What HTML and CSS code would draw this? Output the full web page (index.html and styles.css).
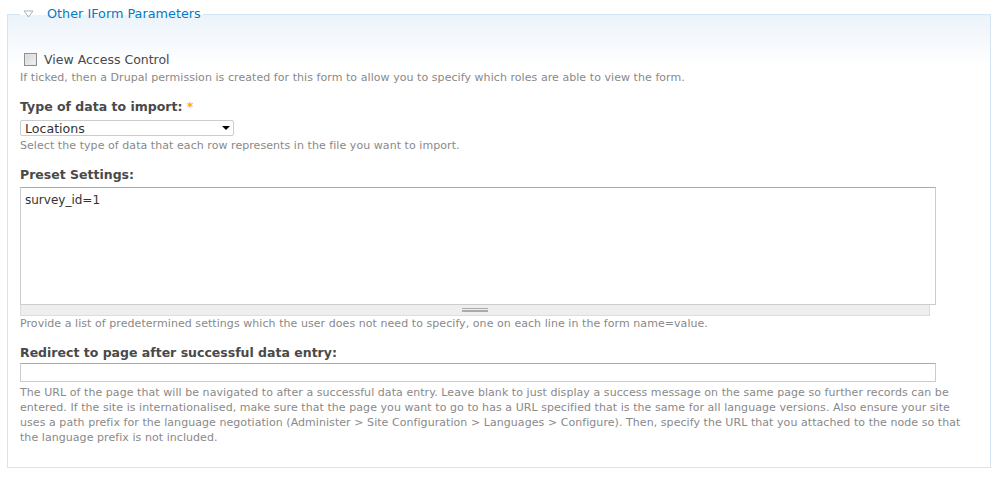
FILE: index.html
```html
<!DOCTYPE html>
<html>
<head>
<meta charset="utf-8">
<link rel="stylesheet" href="styles.css">
</head>
<body>
<fieldset class="box">
  <legend class="legend"><svg class="tri" width="11" height="8" viewBox="0 0 11 8"><path d="M1 1 L10 1 L5.5 7 Z" fill="none" stroke="#a9b1b8" stroke-width="1"/></svg><span class="legend-text">Other IForm Parameters</span></legend>

  <div class="check-row">
    <input type="checkbox" class="check">
    <span class="check-label">View Access Control</span>
  </div>
  <div class="desc d1">If ticked, then a Drupal permission is created for this form to allow you to specify which roles are able to view the form.</div>

  <div class="label l2">Type of data to import: <span class="req">*</span></div>
  <div class="select"><span>Locations</span><svg width="8" height="4" viewBox="0 0 8 4"><path d="M0 0 H8 L4 4 Z" fill="#000"/></svg></div>
  <div class="desc d2">Select the type of data that each row represents in the file you want to import.</div>

  <div class="label l3">Preset Settings:</div>
  <div class="textarea">survey_id=1</div>
  <div class="grippie"><span class="grip"></span></div>
  <div class="desc d3">Provide a list of predetermined settings which the user does not need to specify, one on each line in the form name=value.</div>

  <div class="label l4">Redirect to page after successful data entry:</div>
  <div class="input"></div>
  <div class="desc d4">The URL of the page that will be navigated to after a successful data entry. Leave blank to just display a success message on the same page so further records can be entered. If the site is internationalised, make sure that the page you want to go to has a URL specified that is the same for all language versions. Also ensure your site uses a path prefix for the language negotiation (Administer &gt; Site Configuration &gt; Languages &gt; Configure). Then, specify the URL that you attached to the node so that the language prefix is not included.</div>
</fieldset>
</body>
</html>
```

FILE: styles.css
```css
html, body {
  margin: 0;
  padding: 0;
  background: #fff;
}
body {
  padding-top: 6px;
  font-family: "DejaVu Sans", Verdana, sans-serif;
  color: #494949;
}
.box {
  box-sizing: border-box;
  width: 984px;
  margin: 0 0 0 7px;
  padding: 0 12px 22px 12px;
  border: 1px solid #d4e5f3;
  background: linear-gradient(#ebf3fa 0px, #ffffff 52px);
  min-inline-size: 0;
}
.legend {
  padding: 0 2px 0 2px;
  height: 16px;
  line-height: 16px;
  font-size: 12.8px;
  color: #027ac6;
  display: flex;
  align-items: center;
}
.tri {
  display: block;
  margin: 0 13px 0 1px;
}
.legend-text {
  color: #027ac6;
}
.check-row {
  margin-top: 29px;
  height: 17px;
  display: flex;
  align-items: center;
  padding-left: 4px;
}
.check {
  appearance: none;
  -webkit-appearance: none;
  margin: 0 7px 0 0;
  width: 13px;
  height: 13px;
  box-sizing: border-box;
  border: 1px solid #8f8f8f;
  background: linear-gradient(135deg, #d4d4d4, #f4f4f4);
  box-shadow: inset 0 0 0 1px #e6e6e6;
}
.check-label {
  font-size: 12.5px;
  color: #494949;
}
.desc {
  font-size: 11px;
  letter-spacing: 0.06px;
  line-height: 15px;
  color: #898989;
}
.d1 { margin-top: 2px; }
.d2 { margin-top: 2px; }
.d3 { margin-top: 0; }
.d4 { margin-top: 3px; }
.label {
  font-size: 12.5px;
  font-weight: bold;
  line-height: 16px;
  color: #494949;
}
.req {
  color: #ffae00;
}
.l2 { margin-top: 14px; }
.l3 { margin-top: 14px; }
.l4 { margin-top: 14px; }
.select {
  margin-top: 5px;
  box-sizing: border-box;
  width: 214px;
  height: 16px;
  border: 1px solid #ccc;
  border-radius: 2px;
  background: #fff;
  display: flex;
  align-items: center;
  justify-content: space-between;
  padding: 0 3px 0 4px;
  font-size: 12.6px;
  color: #333;
}
.textarea {
  margin-top: 4px;
  box-sizing: border-box;
  width: 916px;
  height: 118px;
  border: 1px solid #ccc;
  border-top-color: #aaa;
  background: #fff;
  padding: 5px 4px;
  font-size: 12px;
  color: #333;
}
.grippie {
  box-sizing: border-box;
  width: 910px;
  height: 11px;
  background: #eee;
  border: 1px solid #ddd;
  border-top: none;
  display: flex;
  justify-content: center;
  align-items: center;
}
.grip {
  display: block;
  width: 26px;
  height: 4px;
  border-top: 1px solid #aaa;
  border-bottom: 1px solid #aaa;
  box-sizing: border-box;
  background: linear-gradient(#eee 0 0.5px, #aaa 1px 2px, #eee 2px);
}
.input {
  margin-top: 2px;
  box-sizing: border-box;
  width: 916px;
  height: 19px;
  border: 1px solid #ccc;
  border-top-color: #aaa;
  background: #fff;
}
```
